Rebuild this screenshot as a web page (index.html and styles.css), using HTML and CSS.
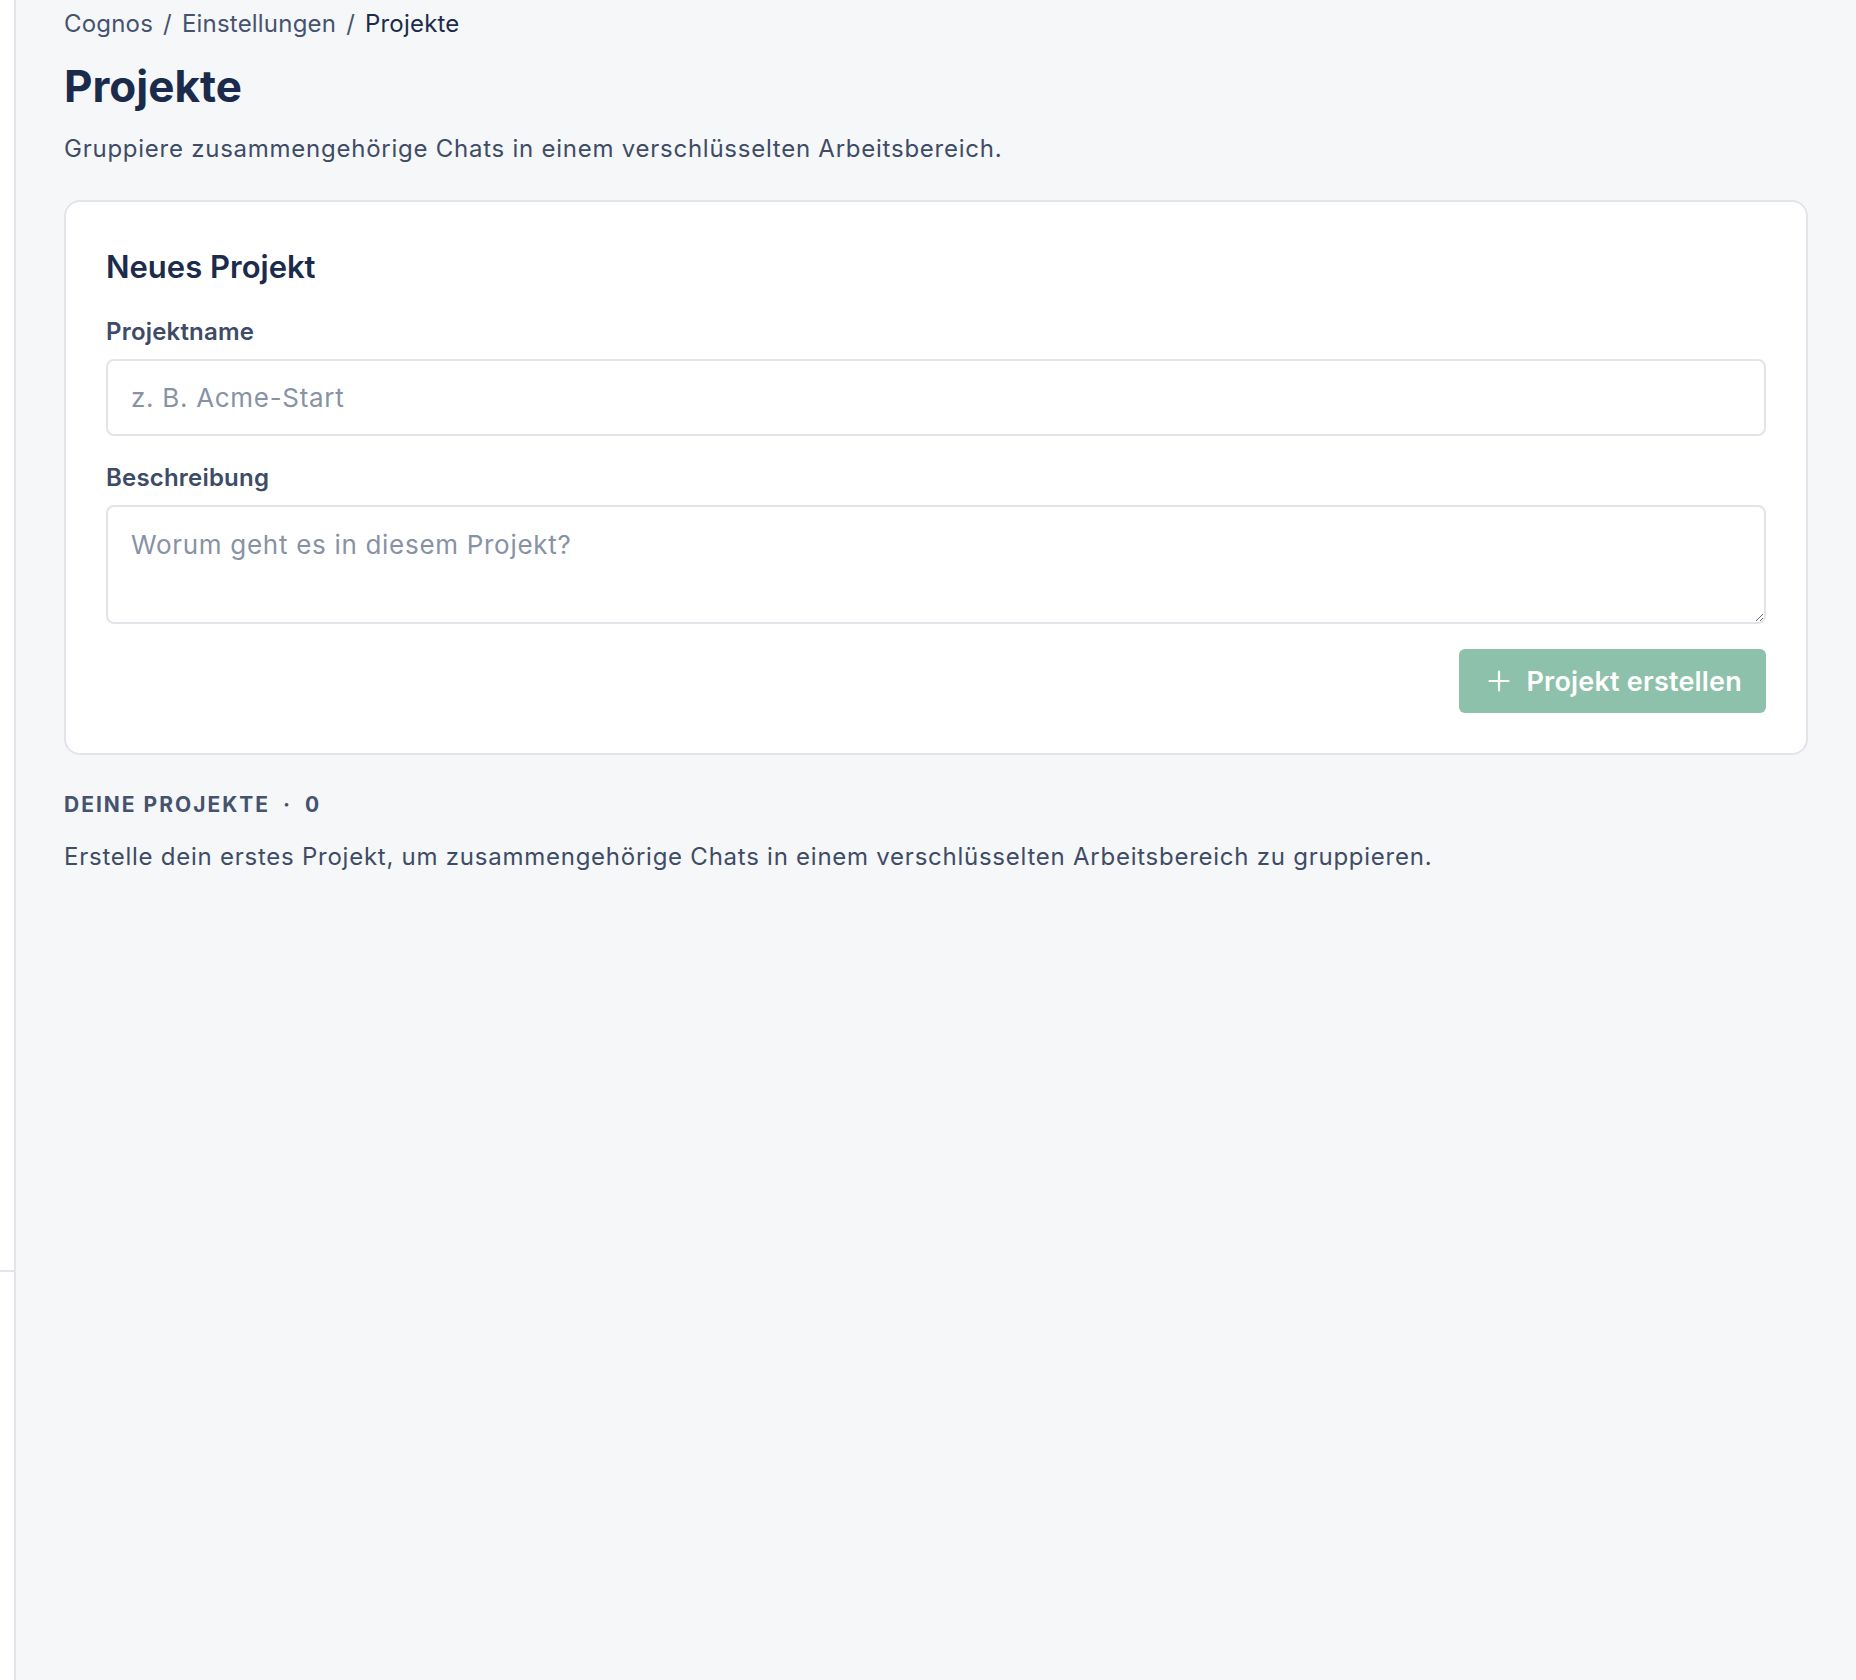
FILE: index.html
```html
<!DOCTYPE html>
<html lang="de">

<head>
    <meta charset="UTF-8">
    <meta name="viewport" content="width=device-width, initial-scale=1.0">
    <title>Projekte</title>
    <link rel="stylesheet" href="styles.css">
</head>

<body>
    <div class="layout">
        <!-- schmale Seitenleiste -->
        <aside class="sidebar">
            <div class="sidebar-top"></div>
        </aside>

        <main class="content">
            <nav class="crumbs">
                <span>Cognos</span>
                <span class="sep">/</span>
                <span>Einstellungen</span>
                <span class="sep">/</span>
                <span class="current">Projekte</span>
            </nav>

            <h1 class="page-title">Projekte</h1>
            <p class="page-sub">Gruppiere zusammengehörige Chats in einem verschlüsselten Arbeitsbereich.</p>

            <section class="card">
                <h2 class="card-title">Neues Projekt</h2>

                <label class="field-label" for="name">Projektname</label>
                <input class="field" id="name" type="text" placeholder="z. B. Acme-Start">

                <label class="field-label desc-label" for="desc">Beschreibung</label>
                <textarea class="field area" id="desc" placeholder="Worum geht es in diesem Projekt?"></textarea>

                <div class="actions">
                    <button class="btn" type="button" disabled>
                        <svg width="22" height="22" viewBox="0 0 22 22" fill="none" stroke="currentColor"
                            stroke-width="2.2" stroke-linecap="round">
                            <path d="M11 1.5v19M1.5 11h19" />
                        </svg>
                        Projekt erstellen
                    </button>
                </div>
            </section>

            <h3 class="list-head">Deine Projekte <span class="dot">·</span> 0</h3>
            <p class="empty">Erstelle dein erstes Projekt, um zusammengehörige Chats in einem verschlüsselten Arbeitsbereich zu gruppieren.</p>
        </main>
    </div>
</body>

</html>
```

FILE: styles.css
```css
* {
    margin: 0;
    padding: 0;
    box-sizing: border-box;
}

body {
    font-family: Inter, "Noto Sans", sans-serif;
    background-color: #f6f7f9;
    color: #1b2b4b;
}

.layout {
    display: flex;
    min-height: 1680px;
}

.sidebar {
    width: 16px;
    background-color: #fff;
    border-right: 2px solid #e3e3e9;
}

.sidebar-top {
    height: 1272px;
    border-bottom: 2px solid #e3e3e9;
}

.content {
    flex: 1;
    padding: 8px 48px 40px;
}

.crumbs {
    display: flex;
    gap: 10px;
    font-size: 24px;
    line-height: 32px;
    letter-spacing: 0.2px;
    color: #45536f;
}

.crumbs .current {
    color: #1b2b4b;
}

.page-title {
    margin-top: 20px;
    font-size: 44px;
    line-height: 52px;
    font-weight: 700;
    color: #1b2b4b;
}

.page-sub {
    margin-top: 21px;
    font-size: 24px;
    line-height: 32px;
    letter-spacing: 0.75px;
    color: #3e4c66;
}

.card {
    margin-top: 35px;
    background-color: #fff;
    border: 2px solid #e3e4e9;
    border-radius: 16px;
    padding: 40px;
}

.card-title {
    margin-top: -1px;
    font-size: 31px;
    line-height: 52px;
    font-weight: 600;
    color: #1b2b4b;
}

.field-label {
    display: block;
    margin-top: 24px;
    margin-bottom: 12px;
    font-size: 24px;
    line-height: 30px;
    font-weight: 600;
    letter-spacing: 0.2px;
    color: #3d4b66;
}

.desc-label {
    margin-top: 27px;
}

.field {
    display: block;
    width: 100%;
    height: 77px;
    padding: 0 23px;
    border: 2px solid #e3e4e9;
    border-radius: 8px;
    background-color: #fff;
    font-family: inherit;
    font-size: 26px;
    letter-spacing: 0.7px;
    color: #1b2b4b;
    outline: none;
}

.field::placeholder {
    color: #8892a5;
}

.area {
    height: 119px;
    padding: 22px 23px 10px;
    resize: vertical;
    line-height: 32px;
}

.actions {
    display: flex;
    justify-content: flex-end;
    margin-top: 25px;
}

.btn {
    display: flex;
    align-items: center;
    gap: 17px;
    height: 64px;
    padding: 0 24px 0 29px;
    border: none;
    border-radius: 6px;
    background-color: #8ec1ab;
    color: #fff;
    font-family: inherit;
    font-size: 27px;
    font-weight: 600;
    letter-spacing: 0.2px;
}

.list-head {
    margin-top: 36px;
    font-size: 21px;
    line-height: 28px;
    font-weight: 700;
    letter-spacing: 2px;
    text-transform: uppercase;
    color: #45536e;
}

.list-head .dot {
    margin: 0 6px;
}

.empty {
    margin-top: 22px;
    font-size: 24px;
    line-height: 32px;
    letter-spacing: 0.75px;
    color: #3e4c66;
}
```
